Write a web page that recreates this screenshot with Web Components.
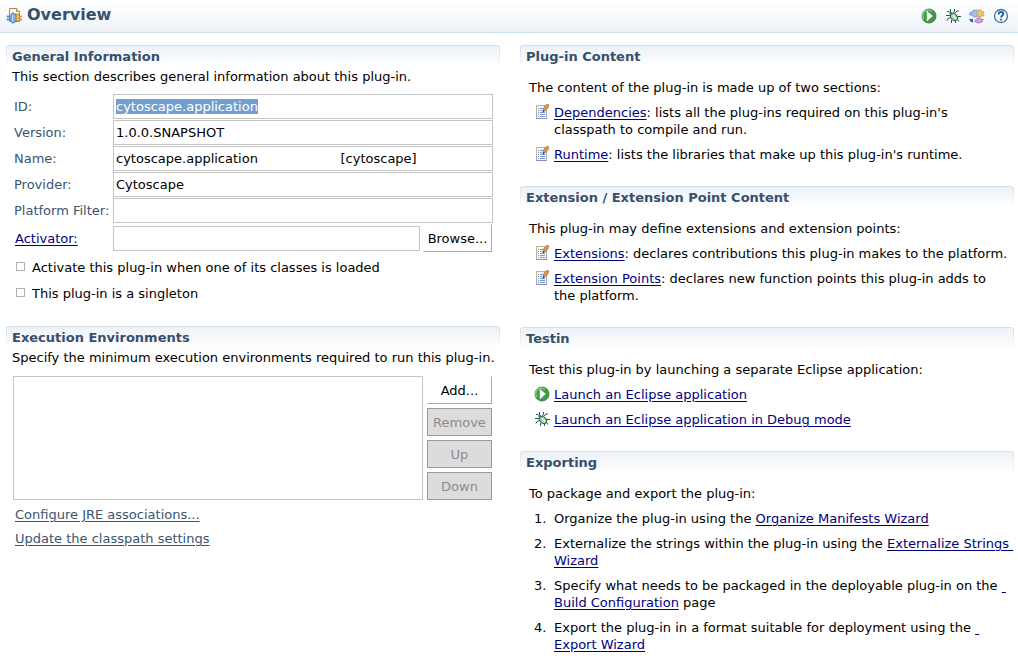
<!DOCTYPE html>
<html lang="en">
<head>
<meta charset="utf-8">
<title>Overview</title>
<style>
  body {
    margin: 0;
    background: #fff;
    color: #000;
    font: 13px/17px "DejaVu Sans", Verdana, sans-serif;
  }
  main {
    display: grid;
    grid-template-columns: 1fr 1fr;
    gap: 20px;
    padding: 12px 4px 12px 6px;
    align-items: start;
  }
  .column {
    display: flex;
    flex-direction: column;
    gap: 23px;
    min-width: 0;
  }
</style>
</head>
<body>

<form-header heading="Overview"></form-header>

<main>
  <div class="column">
    <form-section heading="General Information" description="This section describes general information about this plug-in.">
      <general-info></general-info>
    </form-section>
    <form-section heading="Execution Environments" description="Specify the minimum execution environments required to run this plug-in.">
      <execution-environments></execution-environments>
    </form-section>
  </div>

  <div class="column">
    <form-section heading="Plug-in Content">
      <text-list intro="The content of the plug-in is made up of two sections:">
        <text-item icon="page" link="Dependencies">: lists all the plug-ins required on this plug-in's<br>classpath to compile and run.</text-item>
        <text-item icon="page" link="Runtime">: lists the libraries that make up this plug-in's runtime.</text-item>
      </text-list>
    </form-section>

    <form-section heading="Extension / Extension Point Content">
      <text-list intro="This plug-in may define extensions and extension points:">
        <text-item icon="page" link="Extensions">: declares contributions this plug-in makes to the platform.</text-item>
        <text-item icon="page" link="Extension Points">: declares new function points this plug-in adds to<br>the platform.</text-item>
      </text-list>
    </form-section>

    <form-section heading="Testin">
      <text-list intro="Test this plug-in by launching a separate Eclipse application:">
        <text-item icon="run" link="Launch an Eclipse application"></text-item>
        <text-item icon="debug" link="Launch an Eclipse application in Debug mode"></text-item>
      </text-list>
    </form-section>

    <form-section heading="Exporting">
      <text-list intro="To package and export the plug-in:">
        <text-item number="1.">Organize the plug-in using the <form-link>Organize Manifests Wizard</form-link></text-item>
        <text-item number="2.">Externalize the strings within the plug-in using the <form-link>Externalize Strings&nbsp;<br>Wizard</form-link></text-item>
        <text-item number="3.">Specify what needs to be packaged in the deployable plug-in on the <form-link>&nbsp;<br>Build Configuration</form-link> page</text-item>
        <text-item number="4.">Export the plug-in in a format suitable for deployment using the <form-link>&nbsp;<br>Export Wizard</form-link></text-item>
      </text-list>
    </form-section>
  </div>
</main>

<script>
const icons = {
  overview: `
    <path d="M3.500 .500h7l3 3v10h-10z" fill="#fdfaf0" stroke="#b08a48"/>
    <path d="M10.500 .500v3h3" fill="#f1dfb0" stroke="#b08a48"/>
    <path d="M10 6h3v2h3v1h-3v2h3v1h-3v1h-3z" fill="#f5c93c" stroke="#b57d12" stroke-width=".6"/>
    <path d="M5 6h1V5h2v1h2v8H8v1H6v-1H5v-2H1v-1h4V9H1V8h4z" fill="#85b0e4" stroke="#3f6cb4" stroke-width=".7"/>
    <path d="M6.500 6.500v7" stroke="#c5dcf5"/>`,
  run: `
    <circle cx="8" cy="8" r="7" fill="#3f9a45" stroke="#2a7030" stroke-width=".8"/>
    <path d="M3 11a5.500 5.500 0 0 1 8-7.500" fill="none" stroke="#8fce85" stroke-width="1.500"/>
    <path d="M6 3v10l5.500-5z" fill="#fff" stroke="#dcf3d8" stroke-width=".5"/>`,
  debug: `
    <g fill="none" stroke="#2a5557" stroke-width="1">
      <path d="M5.500 1v3l1 1M9.500 1v2l-1 2M2 3.500h2l2 2M1 7.500h4M2 12.500l1-2 3-1M6.500 15v-3M10 5l2-2h2M12 8.500h4M12 11l2 2.500M10.500 12v3"/>
    </g>
    <ellipse cx="9" cy="9" rx="3" ry="4" transform="rotate(-45 9 9)" fill="#a9d99a" stroke="#28605f"/>
    <path d="M8 7l3 4" stroke="#e3f6d4" stroke-width="1.500"/>
    <circle cx="6" cy="5.500" r="1.500" fill="#3f7f72"/>`,
  plugs: `
    <path d="M4 2h4v7H5V8H3V7H0V6h3V5H1V4h3z" fill="#a9c4ea" stroke="#6b89bb" stroke-width=".6"/>
    <path d="M9 2h3v1h1v1h2v1h-2v2h2v1h-3v1H9z" fill="#f2cd6c" stroke="#b98626" stroke-width=".6"/>
    <path d="M8 10h3v1h2v3h-2v1H8v-1H6v-2h2z" fill="#d9a5e2" stroke="#9658ac" stroke-width=".6"/>
    <path d="M13 11.500h2M13 13.500h1" stroke="#c78a20"/>
    <path d="M0 11h4v4l-1-1-1 0z" fill="#3362a5"/>`,
  help: `
    <circle cx="8" cy="8" r="6.500" fill="#f8fbfe" stroke="#41729f" stroke-width="1.300"/>
    <path d="M5.700 6.500V6a2.300 2 0 0 1 4.600 0c0 1.500-2.200 1.500-2.200 3.500M8 10.800v1.800" fill="none" stroke="#245b8c" stroke-width="1.800"/>`,
  page: `
    <path d="M2.500 1.500h10v13h-10z" fill="#f4f8fd" stroke="#9dacc8"/>
    <path d="M2.500 9V1.500H9" fill="none" stroke="#c5b98c"/>
    <path d="M2 14.500h11" stroke="#7f93bd"/>
    <path d="M4 4.500h1M6 4.500h3M4 6.500h1M6 6.500h2M4 8.500h1M6 8.500h5M4 10.500h1M6 10.500h5M4 12.500h1M6 12.500h5" stroke="#7f98c8"/>
    <path d="M9 6l1-3 3-3 2 1-1 3-3 3z" fill="#da9650" stroke="#a9713c" stroke-width=".6"/>
    <path d="M8.500 8.500L9 6l2 1z" fill="#22252e"/>`
};

// creates the open shadow root of an element from its styles and markup
function render(element, css, html) {
  const template = document.createElement("template");
  template.innerHTML = `<style>${css}</style>${html}`;
  element.attachShadow({ mode: "open" }).append(template.content.cloneNode(true));
}

const linkStyle = `
  a { color: #00007f; text-decoration: underline; text-underline-offset: 2px; }
`;

const buttonStyle = `
  button {
    box-sizing: border-box;
    height: 28px;
    padding: 0;
    border: 1px solid #fff;
    border-right-color: #aaa;
    border-bottom-color: #aaa;
    background: #fff;
    color: #000;
    font: inherit;
  }
  button:disabled {
    border-color: #9c9c9c;
    background: #dcdcdc;
    color: #8c8c8c;
  }
`;

class FormIcon extends HTMLElement {
  connectedCallback() {
    render(this, `
      :host { display: block; width: 16px; height: 16px; }
      svg { display: block; }
    `, `<svg width="16" height="16" viewBox="0 0 16 16" aria-hidden="true">${icons[this.getAttribute("name")]}</svg>`);
  }
}

class FormLink extends HTMLElement {
  connectedCallback() {
    render(this, `:host { display: inline; } ${linkStyle}`, `<a href="#"><slot></slot></a>`);
  }
}

class FormHeader extends HTMLElement {
  connectedCallback() {
    render(this, `
      :host {
        display: flex;
        align-items: center;
        gap: 5px;
        box-sizing: border-box;
        height: 33px;
        padding: 0 9px 0 6px;
        border-bottom: 1px solid #cfdeeb;
        background: linear-gradient(#fff, #eff3f8);
      }
      h1 { margin: 0; padding-bottom: 2px; flex: 1; color: #36506b; font-size: 16px; line-height: 20px; }
      nav { display: flex; gap: 8px; }
      button { padding: 0; border: 0; background: none; }
    `, `
      <form-icon name="overview"></form-icon>
      <h1>${this.getAttribute("heading")}</h1>
      <nav>
        <button aria-label="Launch"><form-icon name="run"></form-icon></button>
        <button aria-label="Debug"><form-icon name="debug"></form-icon></button>
        <button aria-label="Export"><form-icon name="plugs"></form-icon></button>
        <button aria-label="Help"><form-icon name="help"></form-icon></button>
      </nav>
    `);
  }
}

class FormSection extends HTMLElement {
  connectedCallback() {
    const description = this.getAttribute("description");
    render(this, `
      :host { display: block; }
      header {
        position: relative;
        box-sizing: border-box;
        height: 22px;
        padding: 2px 6px 0;
        border-top: 1px solid #d2e0ec;
        border-radius: 4px 4px 0 0;
        background: linear-gradient(#edf2f8, #fff);
      }
      header::before {
        content: "";
        position: absolute;
        inset: 0;
        border: solid;
        border-width: 0 1px;
        border-image: linear-gradient(#d2e0ec, #fff) 1;
      }
      h2 { margin: 0; color: #36506b; font-size: 13px; line-height: 17px; }
      p { margin: 0; padding: 1px 0 0 6px; white-space: nowrap; }
    `, `
      <header><h2>${this.getAttribute("heading")}</h2></header>
      ${description ? `<p>${description}</p>` : ""}
      <slot></slot>
    `);
  }
}

class FormField extends HTMLElement {
  connectedCallback() {
    const kind = this.getAttribute("kind");
    const label = this.getAttribute("label");
    render(this, `
      :host { display: flex; align-items: center; color: #3c5470; }
      .name { width: 99px; flex: none; }
      .name a { margin-left: 1px; }
      input {
        box-sizing: border-box;
        flex: 1;
        min-width: 0;
        height: 25px;
        padding: 0 2px;
        border: 1px solid #c4c4c4;
        background: #fff;
        color: #000;
        font: inherit;
        outline: none;
      }
      input::selection { background: #729fcf; color: #fff; }
      button { width: 69px; margin: 0 1px 0 3px; }
      ${linkStyle}
      ${buttonStyle}
    `, kind === "browse" ? `
      <span class="name"><a href="#" id="name">${label}</a></span>
      <input type="text" aria-labelledby="name">
      <button>Browse...</button>
    ` : `
      <label class="name" for="value">${label}</label>
      <input type="text" id="value">
    `);
    this.input = this.shadowRoot.querySelector("input");
    this.input.value = this.getAttribute("value") || "";
    if (this.hasAttribute("selected")) {
      this.input.focus();
      this.input.select();
    }
  }
}

class FormCheck extends HTMLElement {
  connectedCallback() {
    render(this, `
      :host { display: block; }
      label { display: flex; align-items: center; gap: 7px; }
      input {
        appearance: none;
        box-sizing: border-box;
        width: 9px;
        height: 9px;
        margin: 0 0 2px 2px;
        border: 1px solid #b0b0b0;
        background: #fff;
      }
      input:checked { background: #729fcf; }
    `, `<label><input type="checkbox"><slot></slot></label>`);
  }
}

class GeneralInfo extends HTMLElement {
  connectedCallback() {
    const gap = "\u0020".repeat(20);
    render(this, `
      :host { display: block; padding: 9px 7px 0 8px; }
      .fields { display: grid; gap: 1px; }
      .checks { display: grid; gap: 9px; padding: 7px 0 1px; }
    `, `
      <div class="fields">
        <form-field label="ID:" value="cytoscape.application" selected></form-field>
        <form-field label="Version:" value="1.0.0.SNAPSHOT"></form-field>
        <form-field label="Name:" value="cytoscape.application${gap}[cytoscape]"></form-field>
        <form-field label="Provider:" value="Cytoscape"></form-field>
        <form-field label="Platform Filter:"></form-field>
        <form-field kind="browse" label="Activator:"></form-field>
      </div>
      <div class="checks">
        <form-check>Activate this plug-in when one of its classes is loaded</form-check>
        <form-check>This plug-in is a singleton</form-check>
      </div>
    `);
  }
}

class ExecutionEnvironments extends HTMLElement {
  connectedCallback() {
    render(this, `
      :host { display: block; padding: 10px 8px 0 7px; }
      .list { display: flex; gap: 4px; }
      .box { flex: 1; border: 1px solid #c4c4c4; }
      .buttons { display: grid; gap: 4px; width: 65px; }
      .links { display: grid; gap: 7px; padding: 6px 2px 0; }
      ${linkStyle}
      .links a { justify-self: start; color: #3c5470; }
      ${buttonStyle}
    `, `
      <div class="list">
        <div class="box" role="listbox" aria-label="Execution Environments"></div>
        <div class="buttons">
          <button>Add...</button>
          <button disabled>Remove</button>
          <button disabled>Up</button>
          <button disabled>Down</button>
        </div>
      </div>
      <div class="links">
        <a href="#">Configure JRE associations...</a>
        <a href="#">Update the classpath settings</a>
      </div>
    `);
  }
}

class TextList extends HTMLElement {
  connectedCallback() {
    render(this, `
      :host { display: grid; gap: 8px; padding: 12px 0 0 9px; }
      p { margin: 0; }
    `, `<p>${this.getAttribute("intro")}</p><slot></slot>`);
  }
}

class TextItem extends HTMLElement {
  connectedCallback() {
    const icon = this.getAttribute("icon");
    const link = this.getAttribute("link");
    render(this, `
      :host { display: grid; grid-template-columns: 20px 1fr; padding-left: 5px; }
      ${linkStyle}
    `, `
      ${icon ? `<form-icon name="${icon}"></form-icon>` : `<span>${this.getAttribute("number")}</span>`}
      <div>${link ? `<a href="#">${link}</a>` : ""}<slot></slot></div>
    `);
  }
}

customElements.define("form-icon", FormIcon);
customElements.define("form-link", FormLink);
customElements.define("form-header", FormHeader);
customElements.define("form-section", FormSection);
customElements.define("form-field", FormField);
customElements.define("form-check", FormCheck);
customElements.define("general-info", GeneralInfo);
customElements.define("execution-environments", ExecutionEnvironments);
customElements.define("text-list", TextList);
customElements.define("text-item", TextItem);
</script>
</body>
</html>
